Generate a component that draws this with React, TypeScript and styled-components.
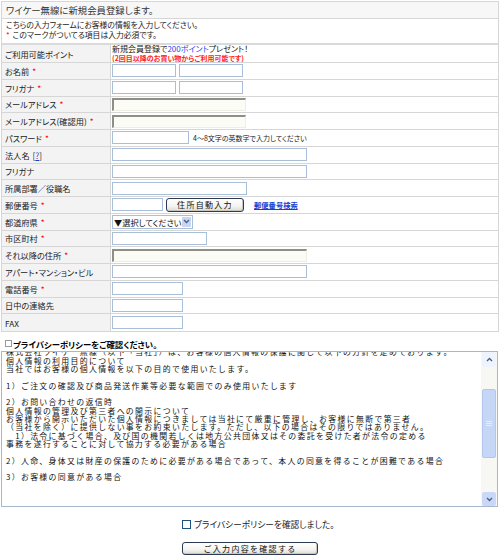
import React, { useLayoutEffect, useRef } from 'react';
import styled, { createGlobalStyle, css } from 'styled-components';

const GlobalStyle = createGlobalStyle`
  body {
    margin: 0;
    background: #fff;
    color: #222;
    font-family: "Noto Sans CJK JP", "Noto Sans", sans-serif;
    font-feature-settings: "palt";
  }
`;

const Page = styled.div`
  width: 500px;
  height: 555px;
  padding: 1px 1px 0 1px;
  box-sizing: border-box;
  overflow: hidden;
`;

const Frame = styled.div`
  width: 498px;
  border: 1px solid #d6d6d6;
  box-sizing: border-box;
`;

const TitleBar = styled.div`
  height: 17px;
  line-height: 16px;
  padding-left: 4px;
  background: #f7f7f7;
  border-bottom: 1px solid #d6d6d6;
  box-sizing: border-box;
  font-size: 9.4px;
  color: #333;
`;

const Intro = styled.div`
  height: 26px;
  padding: 1px 4px 0;
  border-bottom: 2px solid #dadada;
  box-sizing: border-box;
  font-size: 7.8px;
  line-height: 10px;
  color: #222;
`;

const Req = styled.span`
  color: #f00;
  margin: 0 3px 0 0;
`;

const Row = styled.div<{ $h?: number }>`
  display: grid;
  grid-template-columns: 109px 1fr;
  height: ${p => p.$h ?? 16.75}px;
  border-bottom: 1px solid #d6d6d6;
  box-sizing: border-box;
  &:last-child {
    border-bottom: none;
  }
`;

const Label = styled.div`
  display: flex;
  align-items: center;
  padding-left: 3px;
  background: #f3f3f3;
  border-right: 1px solid #d6d6d6;
  font-size: 8.2px;
  color: #222;
  white-space: nowrap;
  ${Req} {
    margin: 0 0 0 3px;
  }
`;

const Value = styled.div`
  display: flex;
  align-items: center;
  gap: 3px;
  padding-left: 1px;
  min-width: 0;
`;

const Field = styled.input<{ $w: number; $inset?: boolean }>`
  width: ${p => p.$w}px;
  height: 13px;
  margin: 0;
  padding: 0 2px;
  box-sizing: border-box;
  border: 1px solid #a9bed8;
  background: #fff;
  font-size: 9px;
  font-family: inherit;
  outline: none;
  ${p =>
    p.$inset &&
    css`
      border-style: solid;
      border-width: 2px 1px 1px 2px;
      border-color: #8f8f88 #eeeee6 #eeeee6 #8f8f88;
      background: #fcfcf6;
    `}
`;

const Hint = styled.span`
  margin-left: 1px;
  font-size: 7px;
  color: #222;
  white-space: nowrap;
`;

const Help = styled.span`
  margin-left: 3px;
  a {
    color: #1a3fd0;
  }
`;

const XpButton = styled.button<{ $w: number; $h?: number }>`
  width: ${p => p.$w}px;
  height: ${p => p.$h ?? 14}px;
  margin: 0;
  padding: 0;
  border: 1px solid #2d3a52;
  border-radius: 3px;
  background: linear-gradient(#ffffff, #f4f4f0 60%, #dcdcd4);
  box-shadow: inset -1px -1px 0 #c8c8c0;
  font-family: inherit;
  font-size: 8px;
  letter-spacing: 1.3px;
  line-height: 11px;
  color: #111;
`;

const ZipLink = styled.a`
  margin-left: 7px;
  font-size: 7.3px;
  font-weight: bold;
  color: #1a3fd0;
  text-decoration: underline;
`;

const SelectBox = styled.div`
  display: flex;
  align-items: stretch;
  width: 81px;
  height: 14px;
  border: 1px solid #a9bed8;
  box-sizing: border-box;
  background: #fff;
`;

const SelectText = styled.span`
  flex: 1;
  padding-left: 1px;
  font-size: 8.2px;
  line-height: 12px;
  color: #111;
  white-space: nowrap;
`;

const SelectArrow = styled.span`
  display: flex;
  align-items: center;
  justify-content: center;
  width: 12px;
  margin: 1px;
  background: #c7d6f3;
  border-radius: 1px;
`;

const PointsCell = styled(Value)`
  flex-direction: column;
  align-items: flex-start;
  justify-content: center;
  gap: 0;
`;

const PointsLine = styled.div`
  font-size: 8px;
  line-height: 8.5px;
  color: #222;
  white-space: nowrap;
  em {
    font-style: normal;
    color: #2244ee;
  }
`;

const PointsNote = styled.div`
  font-size: 7px;
  line-height: 8px;
  font-weight: bold;
  color: #f22;
  white-space: nowrap;
`;

const PolicyHeading = styled.div`
  display: flex;
  align-items: center;
  height: 19px;
  padding: 5px 0 1px 4px;
  box-sizing: border-box;
  font-size: 8.4px;
  font-weight: bold;
  color: #000;
`;

const HollowSquare = styled.span`
  display: inline-block;
  width: 5px;
  height: 5px;
  margin-right: 1px;
  border: 1px solid #999;
`;

const PolicyBox = styled.div`
  display: flex;
  width: 497px;
  height: 156px;
  border: 1px solid #a8b8cc;
  box-sizing: border-box;
  background: #fff;
`;

const PolicyText = styled.div`
  flex: 1;
  overflow: hidden;
  padding-left: 4px;
  font-size: 7.9px;
  letter-spacing: 1.33px;
  line-height: 8.33px;
  white-space: pre;
  color: #111;
  font-feature-settings: normal;
`;

const Scrollbar = styled.div`
  display: flex;
  flex-direction: column;
  width: 16px;
  background: #f7f7f4;
`;

const ScrollButton = styled.div<{ $h: number; $bg: string }>`
  display: flex;
  align-items: center;
  justify-content: center;
  height: ${p => p.$h}px;
  margin: 0 1px;
  background: ${p => p.$bg};
  border-radius: 2px;
`;

const Thumb = styled.div`
  display: flex;
  flex-direction: column;
  align-items: center;
  justify-content: center;
  gap: 1px;
  height: 69px;
  margin: 22px 1px 0;
  background: #c6d6f6;
  border: 1px solid #b2c6ee;
  border-radius: 2px;
  box-sizing: border-box;
  i {
    display: block;
    width: 6px;
    height: 1px;
    background: #e6eefd;
  }
`;

const Track = styled.div`
  flex: 1;
`;

const AgreeRow = styled.label`
  display: flex;
  align-items: center;
  height: 12px;
  margin-top: 11px;
  padding-left: 181px;
  font-size: 8.7px;
  color: #222;
`;

const Check = styled.span`
  width: 9px;
  height: 9px;
  margin-right: 3px;
  border: 1px solid #1c5180;
  box-sizing: border-box;
  background: #fff;
`;

const SubmitRow = styled.div`
  display: flex;
  margin-top: 12px;
  padding-left: 181px;
`;

const Chevron = ({ up }: { up?: boolean }) => (
  <svg width="7" height="5" viewBox="0 0 7 5">
    <path
      d={up ? 'M1 4 L3.5 1.5 L6 4' : 'M1 1 L3.5 3.5 L6 1'}
      fill="none"
      stroke="#4d6185"
      strokeWidth="1.4"
    />
  </svg>
);

const policy = `プライバシーポリシー
株式会社ワイケー無線（以下「当社」）は、お客様の個人情報の保護に関して以下の方針を定めております。
個人情報の利用目的について
当社ではお客様の個人情報を以下の目的で使用いたします。

1）ご注文の確認及び商品発送作業等必要な範囲でのみ使用いたします

2）お問い合わせの返信時
個人情報の管理及び第三者への開示について
お客様から開示いただいた個人情報につきましては当社にて厳重に管理し、お客様に無断で第三者
（当社を除く）に提供しない事をお約束いたします。ただし、以下の場合はその限りではありません。
　1）法令に基づく場合、及び国の機関若しくは地方公共団体又はその委託を受けた者が法令の定める
事務を遂行することに対して協力する必要がある場合

2）人命、身体又は財産の保護のために必要がある場合であって、本人の同意を得ることが困難である場合

3）お客様の同意がある場合



`;

type ReqProps = { label: React.ReactNode; required?: boolean };

const FormRow = ({ label, required, children }: ReqProps & { children: React.ReactNode }) => (
  <Row>
    <Label>
      {label}
      {required && <Req>*</Req>}
    </Label>
    <Value>{children}</Value>
  </Row>
);

export default function App() {
  const textRef = useRef<HTMLDivElement>(null);

  useLayoutEffect(() => {
    if (textRef.current) textRef.current.scrollTop = 12;
  }, []);

  return (
    <Page>
      <GlobalStyle />
      <Frame>
        <TitleBar>ワイケー無線に新規会員登録します。</TitleBar>
        <Intro>
          <div>こちらの入力フォームにお客様の情報を入力してください。</div>
          <div>
            <Req>*</Req>このマークがついてる項目は入力必須です。
          </div>
        </Intro>

        <Row $h={18}>
          <Label>ご利用可能ポイント</Label>
          <PointsCell>
            <PointsLine>
              新規会員登録で<em>200ポイント</em>プレゼント！
            </PointsLine>
            <PointsNote>(2回目以降のお買い物からご利用可能です)</PointsNote>
          </PointsCell>
        </Row>
        <FormRow label="お名前" required>
          <Field $w={64} />
          <Field $w={64} />
        </FormRow>
        <FormRow label="フリガナ" required>
          <Field $w={64} />
          <Field $w={64} />
        </FormRow>
        <FormRow label="メールアドレス" required>
          <Field $w={134} $inset />
        </FormRow>
        <FormRow label="メールアドレス(確認用)" required>
          <Field $w={134} $inset />
        </FormRow>
        <FormRow label="パスワード" required>
          <Field $w={77} type="password" />
          <Hint>4〜8文字の英数字で入力してください</Hint>
        </FormRow>
        <FormRow
          label={
            <>
              法人名
              <Help>
                [<a href="#help">?</a>]
              </Help>
            </>
          }
        >
          <Field $w={195} />
        </FormRow>
        <FormRow label="フリガナ">
          <Field $w={195} />
        </FormRow>
        <FormRow label="所属部署／役職名">
          <Field $w={135} />
        </FormRow>
        <FormRow label="郵便番号" required>
          <Field $w={51} />
          <XpButton $w={78} type="button">
            住所自動入力
          </XpButton>
          <ZipLink href="#zip">郵便番号検索</ZipLink>
        </FormRow>
        <FormRow label="都道府県" required>
          <SelectBox>
            <SelectText>▼選択してください</SelectText>
            <SelectArrow>
              <Chevron />
            </SelectArrow>
          </SelectBox>
        </FormRow>
        <FormRow label="市区町村" required>
          <Field $w={95} />
        </FormRow>
        <FormRow label="それ以降の住所" required>
          <Field $w={195} $inset />
        </FormRow>
        <FormRow label="アパート・マンション・ビル">
          <Field $w={195} />
        </FormRow>
        <FormRow label="電話番号" required>
          <Field $w={71} />
        </FormRow>
        <FormRow label="日中の連絡先">
          <Field $w={71} />
        </FormRow>
        <FormRow label="FAX">
          <Field $w={71} />
        </FormRow>
      </Frame>

      <PolicyHeading>
        <HollowSquare />
        プライバシーポリシーをご確認ください。
      </PolicyHeading>
      <PolicyBox>
        <PolicyText ref={textRef}>{policy}</PolicyText>
        <Scrollbar>
          <ScrollButton $h={15} $bg="#eef3fd">
            <Chevron up />
          </ScrollButton>
          <Thumb>
            <i />
            <i />
            <i />
          </Thumb>
          <Track />
          <ScrollButton $h={14} $bg="#c9d8f6">
            <Chevron />
          </ScrollButton>
        </Scrollbar>
      </PolicyBox>

      <AgreeRow>
        <Check />
        プライバシーポリシーを確認しました。
      </AgreeRow>
      <SubmitRow>
        <XpButton $w={136} $h={13} type="button">
          ご入力内容を確認する
        </XpButton>
      </SubmitRow>
    </Page>
  );
}
